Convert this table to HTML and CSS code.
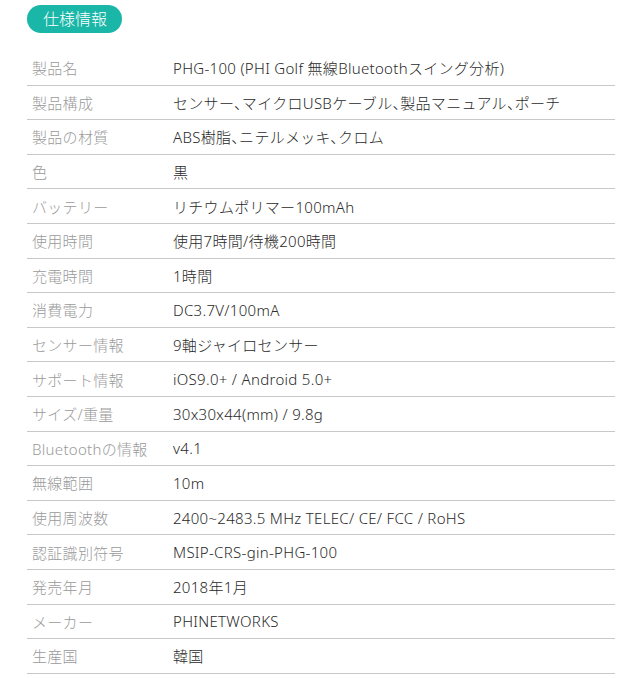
FILE: index.html
```html
<!DOCTYPE html>
<html lang="ja">
<head>
	<meta charset="UTF-8">
	<title>仕様情報</title>
<link rel="stylesheet" href="styles.css">
</head>
<body>
	<div id="spec">
		<div class="badge">仕様情報</div>
		<div class="list">
			<div class="row"><span class="label">製品名</span><span class="value">PHG-100 (PHI Golf 無線Bluetoothスイング分析)</span></div>
			<div class="row"><span class="label">製品構成</span><span class="value">センサー、マイクロUSBケーブル、製品マニュアル、ポーチ</span></div>
			<div class="row"><span class="label">製品の材質</span><span class="value">ABS樹脂、ニテルメッキ、クロム</span></div>
			<div class="row"><span class="label">色</span><span class="value">黒</span></div>
			<div class="row"><span class="label">バッテリー</span><span class="value">リチウムポリマー100mAh</span></div>
			<div class="row"><span class="label">使用時間</span><span class="value">使用7時間/待機200時間</span></div>
			<div class="row"><span class="label">充電時間</span><span class="value">1時間</span></div>
			<div class="row"><span class="label">消費電力</span><span class="value">DC3.7V/100mA</span></div>
			<div class="row"><span class="label">センサー情報</span><span class="value">9軸ジャイロセンサー</span></div>
			<div class="row"><span class="label">サポート情報</span><span class="value">iOS9.0+ / Android 5.0+</span></div>
			<div class="row"><span class="label">サイズ/重量</span><span class="value">30x30x44(mm) / 9.8g</span></div>
			<div class="row"><span class="label">Bluetoothの情報</span><span class="value">v4.1</span></div>
			<div class="row"><span class="label">無線範囲</span><span class="value">10m</span></div>
			<div class="row"><span class="label">使用周波数</span><span class="value">2400~2483.5 MHz TELEC/ CE/ FCC / RoHS</span></div>
			<div class="row"><span class="label">認証識別符号</span><span class="value">MSIP-CRS-gin-PHG-100</span></div>
			<div class="row"><span class="label">発売年月</span><span class="value">2018年1月</span></div>
			<div class="row"><span class="label">メーカー</span><span class="value">PHINETWORKS</span></div>
			<div class="row"><span class="label">生産国</span><span class="value">韓国</span></div>
		</div>
	</div>
</body>
</html>
```

FILE: styles.css
```css
*{
	margin: 0;
	padding: 0;
}
body{
	background: #fff;
	font-family: "Noto Sans", "Noto Sans CJK JP", sans-serif;
	font-weight: 300;
}
#spec{
	padding: 5px 20px 0 27px;
}
.badge{
	display: inline-block;
	height: 28px;
	line-height: 28px;
	padding: 0 15px 0 16px;
	border-radius: 14px;
	background: #1ab6a7;
	color: #fff;
	font-size: 16px;
}
.list{
	margin-top: 18px;
	width: 588px;
}
.row{
	display: flex;
	align-items: center;
	height: 33.6px;
	border-bottom: 1px solid #c8c8c8;
	font-size: 15px;
	letter-spacing: 0.3px;
}
.label{
	width: 141px;
	padding-left: 5px;
	color: #9a9a9a;
}
.value{
	color: #2a2a2a;
	font-feature-settings: "halt";
}
```
